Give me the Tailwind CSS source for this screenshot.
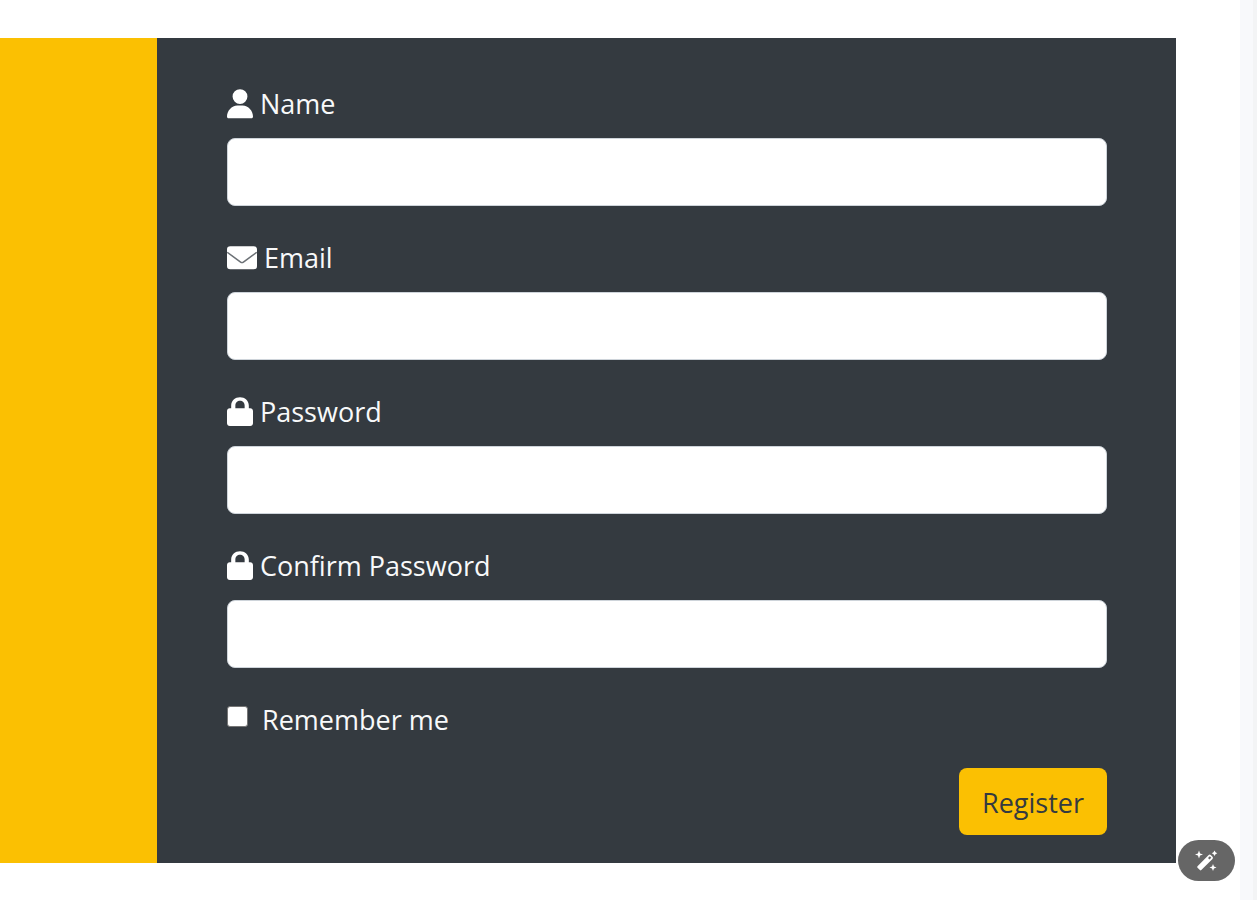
<!DOCTYPE html>
<html lang="en">
<head>
<meta charset="utf-8">
<meta name="viewport" content="width=device-width, initial-scale=1">
<title>Register</title>
<script src="https://cdn.jsdelivr.net/npm/@tailwindcss/browser@4"></script>
</head>
<body class="flex min-h-screen bg-white font-['Open_Sans',sans-serif] text-[27px] text-[#f8f9fa]">
<main class="flex flex-1 flex-col pt-[38px] pr-16 pb-9">
  <div class="flex">
    <div class="w-[157px] shrink-0 bg-[#fbc002]"></div>
    <form class="flex flex-1 flex-col gap-[30px] bg-[#343a40] pt-11 pr-[69px] pb-7 pl-[70px]">
      <div class="flex flex-col gap-3">
        <label for="name" class="flex h-11 items-center gap-[7px]">
          <svg class="h-[30px] w-[26px]" viewBox="0 0 448 512" fill="#fff" aria-hidden="true"><path d="M224 256A128 128 0 1 0 224 0a128 128 0 1 0 0 256zm-45.700 24C79.800 280 0 375 0 470C0 490 10 500 29.700 500H418.300C438 500 448 490 448 470C448 375 368.200 280 269.700 280H178.300z"/></svg>
          Name
        </label>
        <input id="name" type="text" class="h-[68px] w-full rounded-lg border border-[#ced4da] bg-white px-6 text-[#212529]">
      </div>
      <div class="flex flex-col gap-3">
        <label for="email" class="flex h-11 items-center gap-[7px]">
          <svg class="h-[30px] w-[30px]" viewBox="0 0 512 512" aria-hidden="true"><rect y="56" width="512" height="392" rx="56" fill="#fff"/><path d="M4 158 232 326q24 16 48 0L508 158" fill="none" stroke="#6c7176" stroke-width="26"/></svg>
          Email
        </label>
        <input id="email" type="email" class="h-[68px] w-full rounded-lg border border-[#ced4da] bg-white px-6 text-[#212529]">
      </div>
      <div class="flex flex-col gap-3">
        <label for="password" class="flex h-11 items-center gap-[7px]">
          <svg class="h-[30px] w-[26px]" viewBox="0 0 448 512" fill="#fff" aria-hidden="true"><path d="M144 144v48H304V144c0-44.200-35.800-80-80-80s-80 35.800-80 80zM72 192V144C72 60 140 0 224 0s152 60 152 144v48h24c28 0 48 20 48 48V450c0 28-20 48-48 48H48c-28 0-48-20-48-48V240c0-28 20-48 48-48H72z"/></svg>
          Password
        </label>
        <input id="password" type="password" class="h-[68px] w-full rounded-lg border border-[#ced4da] bg-white px-6 text-[#212529]">
      </div>
      <div class="flex flex-col gap-3">
        <label for="confirm" class="flex h-11 items-center gap-[7px]">
          <svg class="h-[30px] w-[26px]" viewBox="0 0 448 512" fill="#fff" aria-hidden="true"><path d="M144 144v48H304V144c0-44.200-35.800-80-80-80s-80 35.800-80 80zM72 192V144C72 60 140 0 224 0s152 60 152 144v48h24c28 0 48 20 48 48V450c0 28-20 48-48 48H48c-28 0-48-20-48-48V240c0-28 20-48 48-48H72z"/></svg>
          Confirm Password
        </label>
        <input id="confirm" type="password" class="h-[68px] w-full rounded-lg border border-[#ced4da] bg-white px-6 text-[#212529]">
      </div>
      <div class="flex flex-col gap-[26px]">
        <div class="flex h-11 items-center gap-[14px]">
          <input id="remember" type="checkbox" class="mb-2 size-[21px] appearance-none rounded-[3px] border border-[#767676] bg-white checked:bg-[#0d6efd]">
          <label for="remember">Remember me</label>
        </div>
        <button type="submit" class="flex h-[67px] w-[148px] items-center justify-center self-end rounded-lg bg-[#fbc002] pt-1 text-[#343a40]">Register</button>
      </div>
    </form>
  </div>
</main>
<div class="w-[17px] shrink-0 border-r-4 border-[#f3f4f5] bg-[#f8f9fb]"></div>
<button type="button" aria-label="Magic edit" class="fixed right-[22px] bottom-[19px] flex h-[41px] w-[57px] items-center justify-center rounded-full bg-[#666]">
  <svg class="size-6" viewBox="0 0 24 24" fill="#fff" aria-hidden="true">
    <path d="M2.500 17.300 13.700 6.100a1.500 1.500 0 0 1 2.100 0l1.700 1.700a1.500 1.500 0 0 1 0 2.100L6.300 21.100a1 1 0 0 1-1.400 0l-2.400-2.400a1 1 0 0 1 0-1.400z"/>
    <path d="m14.800 7.300 1.500 1.500-1.800 1.800-1.500-1.500z" fill="#666"/>
    <path d="m4 1.500 1.100 2.900L8 5.500 5.100 6.600 4 9.500 2.900 6.600 0 5.500 2.900 4.400zM19.500 1.500l1 1.800 1.800 1-1.800 1-1 1.800-1-1.800-1.800-1 1.800-1zM18 15l1 2.500 2.500 1-2.500 1-1 2.500-1-2.500-2.500-1 2.500-1z"/>
  </svg>
</button>
</body>
</html>
